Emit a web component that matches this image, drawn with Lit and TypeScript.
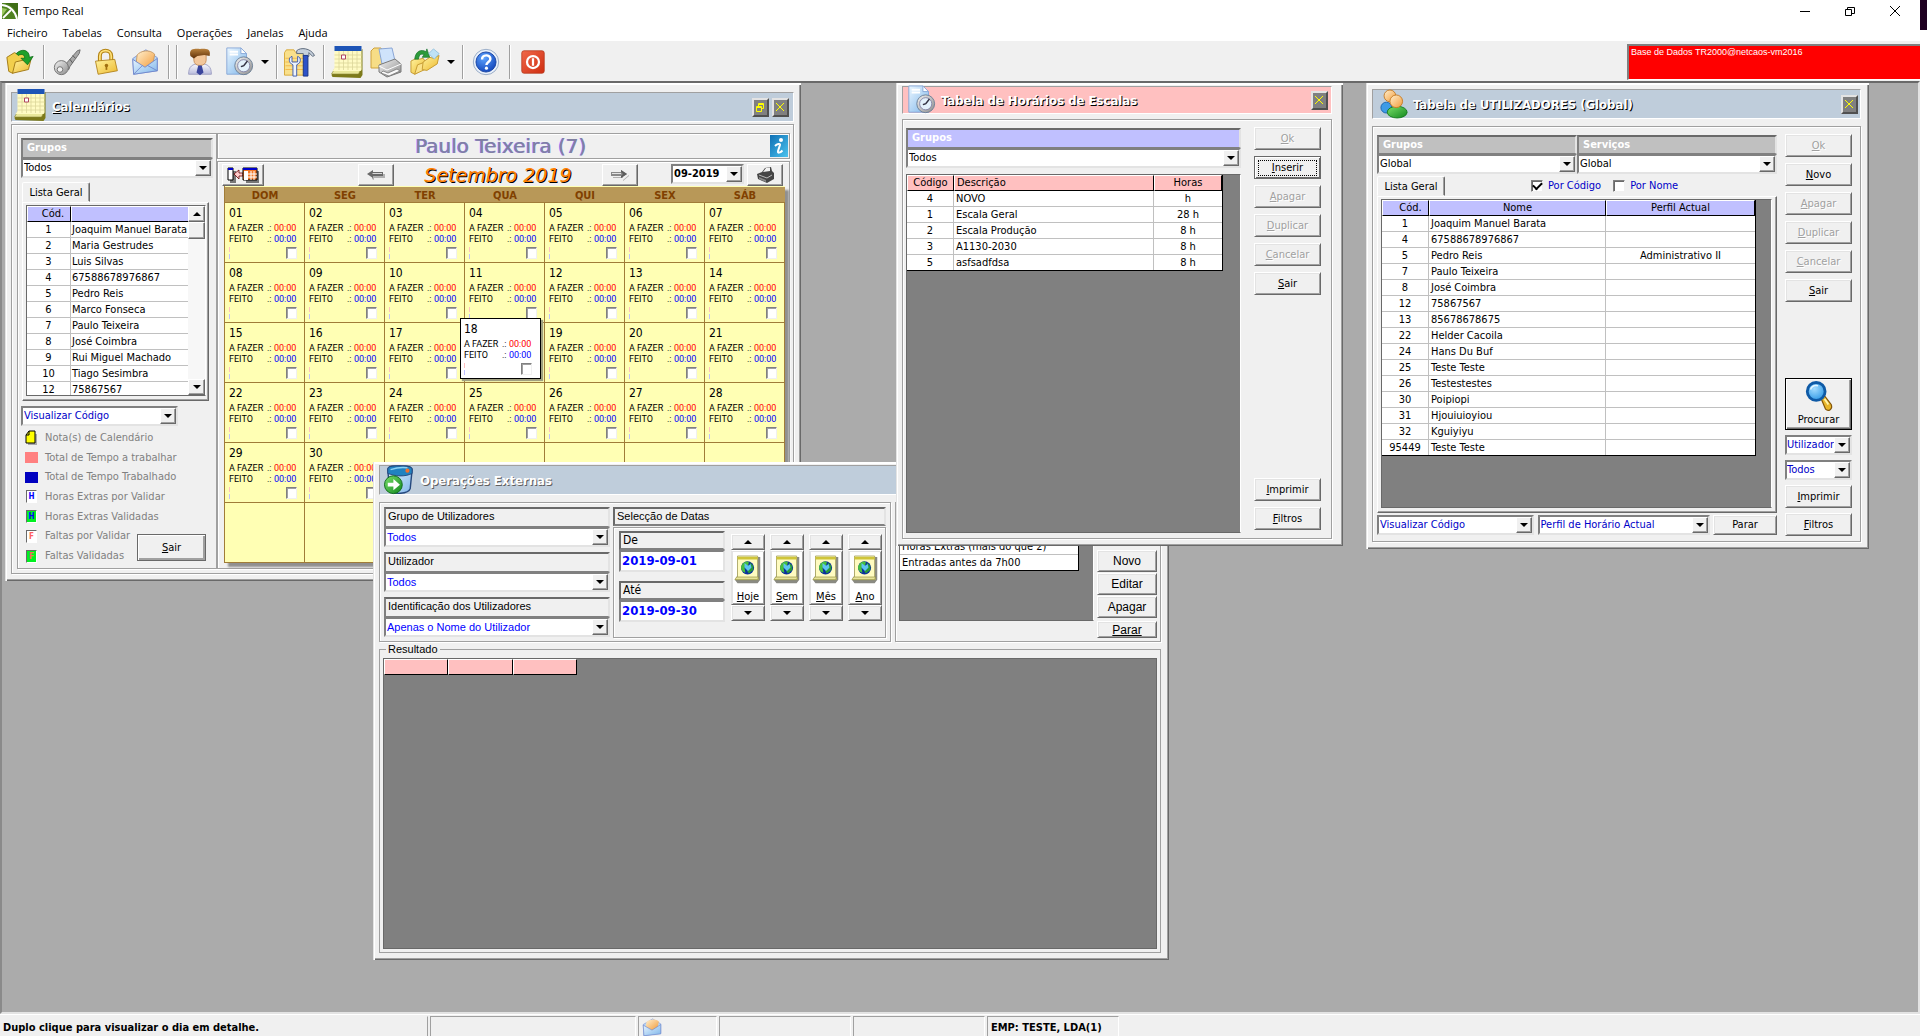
import { LitElement, html, svg, css, nothing } from "lit";
import { classMap } from "lit/directives/class-map.js";

/* ---------- icons ---------- */

const gradients = html`<svg width="0" height="0" class="defs" aria-hidden="true">
  <defs>
    <linearGradient id="gFold" x1="0" y1="0" x2="1" y2="1"><stop offset="0" stop-color="#fff3a0"/><stop offset="1" stop-color="#edb92e"/></linearGradient>
    <linearGradient id="gBlue" x1="0" y1="0" x2="1" y2="1"><stop offset="0" stop-color="#eaf6ff"/><stop offset="1" stop-color="#7fb6ea"/></linearGradient>
    <linearGradient id="gGrey" x1="0" y1="0" x2="1" y2="1"><stop offset="0" stop-color="#f4f4f4"/><stop offset="1" stop-color="#8b8b8b"/></linearGradient>
    <linearGradient id="gOrange" x1="0" y1="0" x2="1" y2="1"><stop offset="0" stop-color="#fff0cf"/><stop offset="1" stop-color="#f29a38"/></linearGradient>
    <linearGradient id="gBrown" x1="0" y1="0" x2="0" y2="1"><stop offset="0" stop-color="#b8803c"/><stop offset="1" stop-color="#5e2f08"/></linearGradient>
    <linearGradient id="gShirt" x1="0" y1="0" x2="0" y2="1"><stop offset="0" stop-color="#fafafe"/><stop offset="1" stop-color="#b9bcdc"/></linearGradient>
    <linearGradient id="gGreen" x1="0" y1="0" x2="1" y2="1"><stop offset="0" stop-color="#7be06a"/><stop offset="1" stop-color="#11871d"/></linearGradient>
    <linearGradient id="gInfo" x1="0" y1="0" x2="1" y2="1"><stop offset="0" stop-color="#0e6fb4"/><stop offset="1" stop-color="#4cc3ee"/></linearGradient>
    <linearGradient id="gRed" x1="0" y1="0" x2="1" y2="1"><stop offset="0" stop-color="#f0694a"/><stop offset="1" stop-color="#cf2d10"/></linearGradient>
    <radialGradient id="gHelp" cx=".4" cy=".3" r=".8"><stop offset="0" stop-color="#5ea4ff"/><stop offset="1" stop-color="#0a3cb4"/></radialGradient>
    <radialGradient id="gLens" cx=".4" cy=".35" r=".8"><stop offset="0" stop-color="#a4dcff"/><stop offset="1" stop-color="#1c8ee2"/></radialGradient>
  </defs>
</svg>`;

const ico = (w: number, h: number, body: unknown, vb = "0 0 32 32") =>
  html`<svg class="ico" width=${w} height=${h} viewBox=${vb} aria-hidden="true">${body}</svg>`;

const logo = ico(16, 16, svg`<path d="M0 0h16v16H0z" fill="#4f8220"/><path d="M3 0h13v13C14 7 10 2 3 0z" fill="#3f6e16"/><path d="M0 2C8 3 13 8 15 16" fill="none" stroke="#fff" stroke-width="2"/><path d="M9 7 1 15" stroke="#fff" stroke-width="1.800"/><path d="M0 5l5 1-5 7z" fill="#9cc860"/>`, "0 0 16 16");

const icons = {
  open: ico(30, 30, svg`<path d="M2 11l8-5 4 2 8-2 3 4v8L8 28l-4-2z" fill="#f2cf4c" stroke="#a07814"/><path d="M8 28l3-12 17-4-3 12z" fill="url(#gFold)" stroke="#a07814"/><path d="M12 7C18 1 26 3 26 11l4-1-6 9-7-7 4 0c0-4-3-5-7-3z" fill="#1fa02a" stroke="#0c6a16" stroke-width=".8"/>`),
  key: ico(30, 30, svg`<path d="M14 19 27 4l3-1-1 4-10 14-1 3-3-1z" fill="#a8a8a8" stroke="#6d6d6d"/><path d="M19 13l3 4M22 9l3 3" stroke="#555"/><circle cx="10" cy="22" r="7.500" fill="url(#gGrey)" stroke="#707070"/><circle cx="8.500" cy="24" r="3" fill="#f0f0f0" stroke="#707070"/>`),
  lock: ico(28, 30, svg`<path d="M9 16V9c0-8 13-8 13 0v6" fill="none" stroke="#b48414" stroke-width="4.500"/><path d="M9 16V9c0-8 13-8 13 0v6" fill="none" stroke="#ffe27a" stroke-width="2"/><path d="M4 15l22-2 3 13-22 4z" fill="url(#gFold)" stroke="#b08018"/><circle cx="16.500" cy="20" r="2" fill="#a07010"/><path d="M16.500 20v5" stroke="#a07010" stroke-width="2"/>`),
  mail: ico(28, 30, svg`<path d="M2 12 17 2l13 9v15L3 30z" fill="#b8d6f6" stroke="#7c93d2"/><path d="M7 8c4-5 14-7 20-1l-2 12-9 5-10-7z" fill="url(#gOrange)" stroke="#c8965a"/><path d="M2 13l14 9 14-10v14L3 30z" fill="url(#gBlue)" stroke="#6f86cc"/><path d="M3 30l10-10M30 26l-11-6" stroke="#6f86cc" fill="none"/>`),
  person: ico(28, 30, svg`<path d="M3 30c0-9 4-12 13-12s13 3 13 12z" fill="url(#gShirt)" stroke="#9a9cc0"/><path d="M9 6v8c0 8 14 8 14 0V6z" fill="#f3c79b" stroke="#c48e5c"/><path d="M5 9C3 0 10 1 16 1s13-1 11 8l-6-1-8 1-4 3z" fill="url(#gBrown)"/><path d="M14 20h4l2 8-4 3-4-3z" fill="#3a459c"/>`),
  docClock: ico(30, 30, svg`<path d="M3 1h15l6 6v22H3z" fill="url(#gBlue)" stroke="#88a8d8"/><path d="M18 1v6h6z" fill="#fff" stroke="#88a8d8"/><path d="M6 5h9M6 8h9" stroke="#fff" stroke-width="2"/><circle cx="21" cy="20" r="9.500" fill="url(#gGrey)" stroke="#6b7f96"/><circle cx="21" cy="20" r="6.500" fill="#e3f1fb" stroke="#88a"/><path d="M21 20l4-5M21 20l-3 1" stroke="#334" stroke-width="1.500"/>`),
  tools: ico(33, 30, svg`<path d="M1 6l2-3h8l2 3h12v24H1z" fill="#f9e08b" stroke="#d6a93a"/><path d="M2 12h22M2 16h22M2 20h22M2 24h22" stroke="#f4b848"/><path d="M9 10c-4 1-4 7 1 9v12h4V19c5-2 5-8 1-9v6h-6z" fill="#eef3fb" stroke="#3e5cae"/><path d="M14 4c4-4 15-3 19 5l-2 1-4-4v4h-6V7h-7z" fill="#c6d0dc" stroke="#5a6678"/><path d="M21 9h5v22h-5z" fill="#2d52c8" stroke="#183384"/>`, "0 0 34 32"),
  calendar: ico(34, 34, svg`<path d="M4 25l-3 5 1 2 28 1 2-3V4z" fill="#7d7a1a"/><path d="M4 24l-3 5h27l3-6z" fill="#e9e79a" stroke="#8c8836" stroke-width=".6"/><path d="M4 4h27v21l-1 1H2l2-3z" fill="#fffbc4"/><path d="M4 1h27v5H4z" fill="#1d54b6"/><path d="M8.500 6v19M13 6v19M17.500 6v19M22 6v19M26.500 6v19M4 10h27M4 14h27M4 18h27M4 22h27" stroke="#dcd79b" stroke-width=".8"/><path d="M11 10h4v4h-4z" fill="#fff" stroke="#b04460"/>`, "0 0 33 34"),
  print: ico(32, 32, svg`<path d="M1 5l3-3h7l2 3h4v14l-6 3H1z" fill="#f7dd86" stroke="#cfa23c"/><path d="M9 3l13-1 3 13-13 3z" fill="#cfe3fb" stroke="#8aa6d6"/><path d="M9 19l16-6 6 5v8l-14 5-8-5z" fill="url(#gGrey)" stroke="#7a7a7a"/><path d="M9 20l8 4 14-6" fill="none" stroke="#fff"/><path d="M13 25l5 2 9-4 3 2-11 5-8-3z" fill="#fafafa" stroke="#777" stroke-width=".8"/>`),
  folders: ico(32, 30, svg`<path d="M1 15l6-3 3 1 4-1 2 3v8L5 29l-4-2z" fill="url(#gFold)" stroke="#c49a30"/><path d="M5 29l3-10 11-4-3 9z" fill="#fbe28a" stroke="#c49a30"/><path d="M14 16l7-5 4 1 6-3-2 9-11 7-5-1z" fill="url(#gFold)" stroke="#c49a30"/><path d="M5 13C6 4 12 2 17 5l1-3 3 9-8 0 2-3c-4-1-5 0-6 5z" fill="#2d9b3a" stroke="#16702a" stroke-width=".7"/><path d="M20 7l5-5 6 5-5 6z" fill="#bfe2f6" stroke="#7ab2d6" stroke-width=".7"/>`),
  help: ico(28, 28, svg`<circle cx="16" cy="16" r="14.500" fill="#eaf1fb" stroke="#8fa3c0"/><circle cx="16" cy="16" r="11.500" fill="url(#gHelp)" stroke="#133f9e"/><path d="M11.500 13c0-6 9.500-6 9.500-.5 0 3.500-4.500 3.500-4.500 7" fill="none" stroke="#fff" stroke-width="2.800"/><circle cx="16.500" cy="23" r="1.800" fill="#fff"/>`),
  power: ico(24, 24, svg`<rect x="1" y="1" width="30" height="30" rx="3" fill="url(#gRed)" stroke="#b4381c"/><circle cx="16" cy="16" r="8" fill="none" stroke="#fff" stroke-width="3"/><path d="M16 11v10" stroke="#fff" stroke-width="3"/>`),
  users: ico(28, 32, svg`<circle cx="7" cy="20" r="6" fill="#3e9be6" stroke="#1a62ac"/><circle cx="11" cy="7" r="6.500" fill="url(#gOrange)" stroke="#c47a24"/><ellipse cx="19" cy="25" rx="11" ry="6.500" fill="url(#gGreen)" stroke="#157a1c"/><circle cx="18" cy="13" r="7" fill="url(#gOrange)" stroke="#c47a24"/>`, "0 0 31 32"),
  external: ico(32, 30, svg`<path d="M4 5C4 1 9 1 16 1s14 0 14 4l-2 20c-2 6-18 7-22 2z" fill="url(#gBlue)" stroke="#26497e" stroke-width="1.500"/><path d="M4 5c0-4 5-4 12-4s14 0 14 4v4c-8 4-18 3-26 0z" fill="#2182c0" stroke="#26497e"/><path d="M7 5c6-2 12-3 18-2" stroke="#8ed2f4" stroke-width="1.500" fill="none"/><circle cx="25" cy="6" r="2.200" fill="#f2702c"/><circle cx="10" cy="21" r="9.500" fill="url(#gGreen)" stroke="#0d6a1a"/><path d="M4 19h6v-4l7 6-7 6v-4H4z" fill="#fff"/>`),
  lens: ico(30, 32, svg`<path d="M18 18l4-2 7 9c2 5-3 8-6 5z" fill="#e9b62a" stroke="#84560a" stroke-width="1.300"/><path d="M22 19l4 6" stroke="#fff2a8" stroke-width="2"/><circle cx="13" cy="11" r="9.500" fill="url(#gLens)" stroke="#0f5aa6" stroke-width="3"/><path d="M7 9c1-3 4-5 8-4" stroke="#e4f6ff" stroke-width="1.600" fill="none"/>`, "0 0 32 34"),
  globe: ico(28, 34, svg`<path d="M6 2h24v26l-3 4H4l-3-4 2-1z" fill="#8a8a82"/><path d="M4 1h23v23l1 4H2l2-4z" fill="#fffbc0" stroke="#a8a464"/><path d="M4 2h23v3H4z" fill="#cfc53a"/><path d="M3 25h25l-1 3H1z" fill="#e8e49a" stroke="#8c8836" stroke-width=".7"/><circle cx="15.500" cy="14.500" r="7.500" fill="#0a2f9e"/><path d="M8 14c1-5 6-8 9-6l-1 4-4 2 1 6c-3-1-5-3-5-6z" fill="#46c03c"/><path d="M18 8l4 4v5l-5 4-2-3 4-4z" fill="#27983a"/><path d="M12 9l4 3 3-2 1 4-4 4-4-4z" fill="#5cc4f0"/>`, "0 0 32 34"),
  swap: ico(32, 16, svg`<path d="M3 4h6v12H3zM19 4h13v12H19z" fill="#777"/><path d="M1 1h5v12H1z" fill="#fff" stroke="#000"/><path d="M1 1h5v2H1z" fill="#00c"/><path d="M7 7l5-4v3h4v3h-4v3z" fill="#fcc" stroke="#600" stroke-width=".8"/><path d="M16 1h14v12H16z" fill="#f37a2a" stroke="#000"/><path d="M16 1h14v2H16z" fill="#00c"/><path d="M17 4h4v9h-4z" fill="#fff"/><path d="M24 4v9M27 4v9M21 7h9M21 10h9" stroke="#fff"/>`, "0 0 32 16"),
  prev: ico(18, 12, svg`<path d="M4 7h1v3l2 1V9h11V5h-2v2z" fill="#b0b0b0"/><path d="M0 5l6-4v2h10v4H6v2z" fill="#696969"/><path d="M6 4h9v1H5z" fill="#d8d8d8"/>`, "0 0 18 12"),
  next: ico(18, 12, svg`<path d="M2 8h10v3l6-5v1l-6 5V9H2z" fill="#b0b0b0"/><path d="M0 3h10V1l6 4-6 4V7H0z" fill="#8a8a8a"/><path d="M10 3V1l6 4-6 4V7l2-2z" fill="#5d5d5d"/><path d="M1 4h9v1H1z" fill="#e4e4e4"/>`, "0 0 18 12"),
  printer: ico(18, 16, svg`<path d="M1 7l5-2 3-4 6-1 1 4 2 2v6l-7 4-9-4z" fill="#454545"/><path d="M7 5l3-4 4-.5V4z" fill="#f2f2f2"/><path d="M3 8l8 3 5-3" stroke="#b8b8b8" fill="none"/><path d="M3 10l7 3v2l-7-3z" fill="#888"/>`, "0 0 18 16"),
  info: ico(18, 22, svg`<rect width="18" height="22" fill="url(#gInfo)"/><circle cx="11" cy="5" r="2" fill="#fff"/><path d="M5 11c2-2 5.500-3 5-1l-2 6c-.5 2.500 2 2 4.500-.5" fill="none" stroke="#fff" stroke-width="2"/>`, "0 0 18 22"),
};

const glyph = {
  min: svg`<path d="M0 5.500h10" stroke="#000"/>`,
  max: svg`<path d="M.5 3.500h6v6h-6zM2.500 3V1.500h7v6H7" fill="none" stroke="#000"/>`,
  close: svg`<path d="M0 0l10 10M10 0L0 10" stroke="#000"/>`,
};

/* ---------- data ---------- */

const people: [string, string][] = [
  ["1", "Joaquim Manuel Barata"], ["2", "Maria Gestrudes"], ["3", "Luis Silvas"], ["4", "67588678976867"],
  ["5", "Pedro Reis"], ["6", "Marco Fonseca"], ["7", "Paulo Teixeira"], ["8", "José Coimbra"],
  ["9", "Rui Miguel Machado"], ["10", "Tiago Sesimbra"], ["12", "75867567"],
];

const users: [string, string, string][] = [
  ["1", "Joaquim Manuel Barata", ""], ["4", "67588678976867", ""], ["5", "Pedro Reis", "Administrativo II"],
  ["7", "Paulo Teixeira", ""], ["8", "José Coimbra", ""], ["12", "75867567", ""], ["13", "85678678675", ""],
  ["22", "Helder Cacoila", ""], ["24", "Hans Du Buf", ""], ["25", "Teste Teste", ""], ["26", "Testestestes", ""],
  ["30", "Poipiopi", ""], ["31", "Hjouiuioyiou", ""], ["32", "Kguiyiyu", ""], ["95449", "Teste Teste", ""],
];

const shifts: [string, string, string][] = [
  ["4", "NOVO", "h"], ["1", "Escala Geral", "28 h"], ["2", "Escala Produção", "8 h"],
  ["3", "A1130-2030", "8 h"], ["5", "asfsadfdsa", "8 h"],
];

const weekdays = ["DOM", "SEG", "TER", "QUA", "QUI", "SEX", "SÁB"];
const firstWeekday = 0;
const daysInMonth = 30;
const selectedDay = 18;

/* ---------- template helpers ---------- */

/** Renders a caption in which "&" marks the accelerator letter. */
const caption = (text: string) => {
  const at = text.indexOf("&");
  return at < 0 ? text : html`${text.slice(0, at)}<u>${text[at + 1]}</u>${text.slice(at + 2)}`;
};

const button = (text: string, disabled = false, extra = "") =>
  html`<button class="btn ${extra}" ?disabled=${disabled}><span>${caption(text)}</span></button>`;

const combo = (value: string, label: string, extra = "") =>
  html`<label class="combo ${extra}"><select aria-label=${label}><option>${value}</option></select><i class="drop"></i></label>`;

const labelledCombo = (label: string, value: string, extra = "") =>
  html`<label class="labelled ${extra}"><span class="cap">${label}</span>
    <span class="combo"><select><option>${value}</option></select><i class="drop"></i></span></label>`;

const titleBar = (icon: unknown, text: string, extra: string, buttons: unknown) =>
  html`<header class="title ${extra}">${icon}<h2>${caption(text)}</h2>${buttons}</header>`;

const closeBtn = html`<button class="mini" aria-label="Fechar"><svg width="11" height="11" viewBox="0 0 11 11"><path d="M1 1l8 8M9 1L1 9" stroke="#ff0"/></svg></button>`;
const restoreBtn = html`<button class="mini" aria-label="Restaurar"><svg width="11" height="11" viewBox="0 0 11 11"><path d="M1.500 4.500h5v5h-5zM1 5.500h6M3.500 4V1.500h5v5H7M3 2.500h6" fill="none" stroke="#ff0"/></svg></button>`;

class AppRoot extends LitElement {
  static styles = css`
    :host { display: block; --ui: "DejaVu Sans Condensed", "DejaVu Sans", sans-serif; --sans: "Liberation Sans", Arial, sans-serif;
      font: 11px/14px var(--ui); color: #000; }
    * { box-sizing: border-box; }
    button, select, input { font: inherit; color: inherit; margin: 0; }
    h1, h2, p, ul, menu { margin: 0; padding: 0; font: inherit; list-style: none; }
    svg { display: block; flex: none; }
    .defs { position: absolute; }
    .screen { display: grid; grid-template-columns: 1fr 7px; height: 100vh; background: #fff; }
    .edge { background: #1e0020; height: 30px; }
    .app { display: flex; flex-direction: column; min-width: 0; background: #f0f0f0; }

    .caption { display: flex; align-items: center; height: 22px; padding: 0 3px 0 2px; background: #fff; font: 11px/16px "Open Sans", sans-serif; }
    .caption h1 { padding-left: 5px; flex: 1; }
    .caption button { width: 45px; height: 20px; border: 0; background: none; display: grid; place-items: center; padding: 0; }
    .menu { display: flex; gap: 15px; height: 19px; padding: 0 7px; background: #fff; font: 11px/21px "Open Sans", sans-serif; }
    .menu a { color: #000; text-decoration: none; }

    .toolbar { display: flex; align-items: center; height: 40px; padding: 1px 0 0; }
    .toolbar button { width: 39px; height: 38px; border: 0; padding: 0; background: none; display: grid; place-items: center; }
    .toolbar .arrow { width: 14px; }
    .toolbar hr { width: 8px; height: 34px; margin: 0; border: 0; background: linear-gradient(90deg, transparent 4px, #a0a0a0 4px, #a0a0a0 5px, #fff 5px, #fff 6px, transparent 6px); }
    .arrow::before, .drop::before { content: ""; border: 4px solid transparent; border-top-color: #000; border-bottom: 0; }
    .db { margin: 0 0 0 auto; width: 293px; height: 36px; padding: 0 2px; background: #f00; color: #fff; font: 9px/13px var(--sans); border: 2px solid #808080; border-right: 0; border-bottom: 1px solid #fff; }

    .desktop { position: relative; flex: 1; overflow: hidden; background: #ababab; border: 2px solid; border-color: #696969 #e3e3e3 #e3e3e3 #8a8a8a; }
    .win { position: absolute; display: flex; flex-direction: column; background: #f0f0f0; box-shadow: inset 1px 0 #e3e3e3, inset 2px 2px #fff, inset -1px -1px #696969, inset -2px -2px #a0a0a0; }
    .w-cal { left: 3px; top: 0; width: 796px; height: 498px; padding: 9px 7px 7px 6px; gap: 2px; }
    .w-ops { left: 371px; top: 379px; width: 796px; height: 498px; padding: 3px 8px 7px 6px; }
    .w-shift { left: 894px; top: 0; width: 447px; height: 463px; padding: 3px 11px 7px 6px; gap: 5px; }
    .w-users { left: 1364px; top: 0; width: 503px; height: 466px; padding: 6px 8px 7px 6px; gap: 7px; }

    .title { display: flex; align-items: center; height: 30px; flex: none; padding: 0 3px; background: #bfcddb; border: 1px solid; border-color: #a0a0a0 #fff #fff #a0a0a0; }
    .title h2 { flex: 1; font: bold 13px/16px var(--ui); color: #fff; text-shadow: 1px 1px #000; padding: 1px 0 0 5px; }
    .title.pink { background: #ffc0c0; height: 28px; }
    .title.soft h2 { text-shadow: 1px 1px #606060; }
    .w-cal .title { padding: 0 4px 0 1px; }
    .w-cal .title h2 { padding-top: 0; }
    .w-cal .title .ico { align-self: flex-start; margin-top: -5px; }
    .w-users .title { padding: 0 2px 0 7px; }
    .mini { width: 17px; height: 19px; margin-left: 3px; padding: 0; display: grid; place-items: center; background: #808080; border: 2px solid; border-color: #e3e3e3 #505050 #505050 #e3e3e3; }

    .etch { border: 1px solid #a0a0a0; box-shadow: 1px 1px #fff, inset 1px 1px #fff; }
    .col { display: flex; flex-direction: column; }
    .row { display: flex; }
    .fill { flex: 1; min-width: 0; min-height: 0; }

    .btn { height: 23px; flex: none; padding: 0; text-align: center; background: #f0f0f0; border: 1px solid; border-color: #fff #696969 #696969 #fff; box-shadow: inset 1px 1px #e3e3e3, inset -1px -1px #a0a0a0; }
    .btn:disabled { color: #a0a0a0; text-shadow: 1px 1px #fff; }
    .btn.focus { border-color: #696969; box-shadow: inset 1px 1px #fff, inset -1px -1px #696969; padding: 1px; }
    .btn.focus span { display: block; border: 1px dotted #000; margin: 1px 2px; }

    .combo { display: grid; height: 20px; background: #fff; border: 2px solid; border-color: #808080 #e3e3e3 #e3e3e3 #808080; }
    .combo select { grid-area: 1 / 1; width: 100%; height: 16px; border: 0; outline: 0; padding: 0 16px 0 1px; appearance: none; background: none; border-radius: 0; }
    .drop { grid-area: 1 / 1; justify-self: end; width: 16px; height: 16px; pointer-events: none; display: grid; place-items: center; background: #f0f0f0; border: 1px solid; border-color: #fff #696969 #696969 #fff; box-shadow: inset -1px -1px #a0a0a0; }
    .blue { color: #0000c8; }
    .labelled { display: flex; flex-direction: column; }
    .labelled .cap { height: 20px; padding: 1px 4px; background: #c0c0c0; color: #fff; font-weight: bold; border: 2px solid; border-color: #696969 #e3e3e3 #808080 #808080; border-bottom-width: 1px; }
    .labelled.violet .cap { background: #c0c0ff; }

    .grid { background: #808080; border: 1px solid; border-color: #696969 #fff #696969 #696969; overflow: hidden; }
    .grid table { border-collapse: separate; border-spacing: 0; table-layout: fixed; border-right: 1px solid #000; border-bottom: 1px solid #000; }
    .grid th, .grid td { height: 16px; padding: 0; line-height: 15px; white-space: nowrap; overflow: hidden; font-weight: normal; text-align: center; vertical-align: top; }
    .grid th { background: #c0c0ff; border: 1px solid; border-color: #fff #000 #000 #fff; line-height: 14px; }
    .grid .code { width: 47px; padding-left: 10px; }
    .grid.rosy th { background: #ffc0c0; }
    .grid td { background: #fff; border-right: 1px solid #c0c0c0; border-bottom: 1px solid #c0c0c0; }
    .grid td:last-child { border-right: 0; }
    .grid .l { text-align: left; padding-left: 2px; }
    .grid tr:last-child td { border-bottom: 0; height: 15px; }

    .tabs { display: flex; align-items: flex-end; height: 20px; }
    .tab { height: 20px; padding: 2px 0 0; border: 1px solid; border-color: #fff #696969 transparent #fff; border-radius: 2px 2px 0 0; background: #f0f0f0; width: 68px; box-shadow: inset -1px 0 #a0a0a0; }
    .tabpanel { border: 1px solid; border-color: #fff #696969 #696969 #fff; box-shadow: inset -1px -1px #a0a0a0; }

    /* calendar window */
    .cal-body { padding: 8px 3px 4px 5px; }
    .side { width: 200px; flex: none; padding: 4px 3px 2px; }
    .side .tabs { margin: 4px 0 0 1px; }
    .side .tabpanel { height: 199px; margin: 0 4px 0 1px; padding: 2px 2px 4px 3px; }
    .people { display: grid; grid-template-columns: 1fr 17px; height: 191px; background: #fff; }
    .people table { border: 0; width: 162px; }
    .people .clip { overflow: hidden; }
    .people .code { width: 44px; padding-left: 8px; }
    .people .l { padding-left: 1px; }
    .scroll { display: flex; flex-direction: column; background: #f7f7f7; }
    .scroll button { height: 16px; width: 17px; padding: 0; display: grid; place-items: center; background: #f0f0f0; border: 1px solid; border-color: #fff #696969 #696969 #fff; box-shadow: inset -1px -1px #a0a0a0; }
    .scroll span { height: 17px; background: #f0f0f0; border: 1px solid; border-color: #fff #696969 #696969 #fff; box-shadow: inset -1px -1px #a0a0a0; }
    .scroll .down { margin-top: auto; }
    .up::before { content: ""; border: 4px solid transparent; border-bottom-color: #000; border-top: 0; }
    .down::before { content: ""; border: 4px solid transparent; border-top-color: #000; border-bottom: 0; }
    .side > .combo { width: 157px; margin-top: 5px; }
    .foot { display: grid; margin-top: 2px; }
    .legend { grid-area: 1 / 1; display: grid; grid-auto-rows: 1fr; color: #808080; }
    .legend li { display: grid; grid-template-columns: 20px 1fr; align-items: center; padding-left: 4px; }
    .chip { width: 13px; height: 11px; }
    .c-pink { background: #ff8080; }
    .c-blue { background: #0000c0; }
    .c-box { width: 11px; height: 13px; margin-left: 1px; background: #fff; border: 1px solid; border-color: #696969 #fff #fff #696969; font: bold 8px/11px var(--ui); text-align: center; }
    .c-green { background: #00f020; }
    .t-blue { color: #0000ff; } .t-pink { color: #ff6060; }
    .foot .btn { grid-area: 1 / 1; align-self: end; justify-self: end; width: 69px; height: 27px; margin: 0 7px 5px 0; border-color: #696969; box-shadow: inset 1px 1px #fff, inset -2px -2px #a0a0a0; }

    .person { display: grid; grid-template-columns: 1fr auto; align-items: center; height: 26px; padding: 0 1px 0 14px; }
    .person h2 { text-align: center; font: 20px/24px "DejaVu Sans", sans-serif; color: #8080a0; text-shadow: -1px 0 #9080ff; }
    .cal-panel { margin-top: 2px; padding: 2px 6px 0 4px; flex: 1; }
    .cal-tools { display: flex; height: 22px; }
    .tool { width: 36px; height: 22px; padding: 0; display: grid; place-items: center; background: #f0f0f0; border: 1px solid; border-color: #fff #696969 #696969 #fff; box-shadow: inset -1px -1px #a0a0a0; }
    .tool.wide { width: 42px; margin-right: 94px; }
    .month { flex: 1; text-align: center; font: italic 19px/22px "DejaVu Sans", sans-serif; color: #ff8000; text-shadow: 1px 1px #000; }
    .cal-tools .combo { width: 73px; font-weight: bold; margin: 0 3px 0 33px; }
    .cal { margin-left: 2px; width: 561px; table-layout: fixed; border-collapse: separate; border-spacing: 0; background: #ffffb4; border-left: 1px solid #a07c38; box-shadow: 4px 4px 2px #909090; }
    .cal th { height: 17px; padding: 2px 0 0; background: #b89858; color: #804000; font: bold 11px/13px var(--ui); border-top: 1px solid #ffffb4; border-bottom: 1px solid #a07c38; }
    .cal td { height: 60px; padding: 0; vertical-align: top; border-right: 1px solid #a07c38; border-bottom: 1px solid #a07c38; position: relative; }
    .day { display: grid; grid-template-columns: 38px 7px 1fr; grid-template-rows: 20px 11px 11px 15px; padding-left: 4px; width: 79px; height: 59px; font: 9px/11px Roboto, var(--sans); align-items: center; }
    .day time { grid-column: 1 / 4; font: 12px/20px var(--ui); }
    .day b { font-weight: normal; color: #f00; }
    .day b.done { color: #00f; }
    .day em { width: 1px; height: 12px; background: linear-gradient(#ffc0c0 5px, transparent 5px, transparent 7px, #c0c0ff 7px); }
    .day input { grid-column: 3; appearance: none; width: 11px; height: 12px; margin-left: 12px; background: #fff; border: 1px solid; border-color: #808080 #f0f0f0 #f0f0f0 #808080; box-shadow: inset 1px 1px #a0a0a0; }
    .day.picked { position: absolute; left: -5px; top: -5px; width: 81px; height: 61px; background: #fff; border: 1px solid #000; padding-left: 3px; z-index: 1; box-shadow: 2px 2px 1px #a0a080; }

    /* external operations window */
    .w-ops { font-family: var(--sans); }
    .ops-top { display: flex; gap: 4px; margin-top: 7px; height: 140px; flex: none; }
    .ops-filter { display: flex; gap: 3px; width: 512px; padding: 4px; }
    .ops-filter .col { gap: 5px; width: 226px; }
    .flat .cap { height: 20px; line-height: 15px; background: #f0f0f0; color: #000; font-weight: normal; padding: 0 2px; }
    .flat .combo { color: #0000ff; }
    .dates { flex: 1; }
    .dates .cap { height: 19px; padding: 0 2px; line-height: 15px; border: 2px solid; border-color: #696969 #e3e3e3 #808080 #696969; }
    .dates .panel { display: flex; justify-content: space-between; padding: 3px 3px 2px 5px; height: 111px; margin-top: 1px; }
    .range { display: flex; flex-direction: column; gap: 9px; width: 106px; font-family: var(--ui); }
    .range label { display: flex; flex-direction: column; font-size: 12px; }
    .range input { height: 22px; padding: 0 0 2px 1px; width: 106px; border: 2px solid; border-color: #808080 #e3e3e3 #e3e3e3 #808080; background: #fff; font: bold 13px/16px var(--ui); color: #0000ff; border-radius: 0; outline: 0; }
    .spins { display: flex; gap: 5px; padding-top: 3px; }
    .spin { display: flex; flex-direction: column; width: 34px; }
    .spin .btn { height: 16px; display: grid; place-items: center; }
    .spin .pick { height: 55px; background: #fff; display: flex; flex-direction: column; align-items: center; gap: 3px; padding-top: 2px; font-family: var(--ui); border-left-color: #e3e3e3; }
    .saved { flex: 1; display: flex; gap: 3px; padding: 3px; }
    .saved .grid { flex: 1; height: 115px; }
    .saved .grid table { width: 179px; font-family: var(--ui); }
    .saved .col { width: 60px; gap: 1px; justify-content: flex-end; font-size: 12px; }
    .saved .btn { height: 22px; }
    .saved .btn:last-child { height: 17px; margin-top: 2px; text-decoration: underline; }
    fieldset { flex: 1; min-width: 0; min-height: 0; margin: 0; border: 1px solid #a0a0a0; padding: 2px 3px 3px; display: flex; }
    legend { padding: 0 2px; margin-left: 3px; line-height: 14px; }
    .result { border-color: #696969; }
    .result table { width: 193px; border: 0; }
    .result th { height: 16px; }

    /* shift and user tables */
    .body2 { display: flex; gap: 13px; padding: 8px 10px 5px 3px; }
    .body3 { display: flex; gap: 8px; padding: 8px 8px 5px 4px; }
    .acts { width: 67px; display: flex; flex-direction: column; gap: 6px; flex: none; }
    .body2 .acts { padding-bottom: 3px; margin-top: -1px; }
    .body3 .acts { gap: 5px; margin-top: -1px; }
    .acts .top { display: flex; flex-direction: column; gap: 6px; margin-bottom: auto; }
    .acts .combo select { padding-left: 0; }
    .find { height: 52px; border: 1px solid #000; font: inherit; background: #f0f0f0; box-shadow: inset 1px 1px #fff, inset -1px -1px #696969, inset -2px -2px #a0a0a0; display: flex; flex-direction: column; align-items: center; justify-content: space-between; padding: 2px 0 3px; }
    .shifts { margin-top: 6px; }
    .shifts table { width: 316px; }
    .pair { display: grid; grid-template-columns: 1fr 1fr; }
    .pair .cap { height: 19px; }
    .order { display: flex; flex: 1; align-self: center; padding-left: 86px; color: #0000c8; gap: 12px; }
    .order label { display: flex; align-items: center; gap: 5px; }
    .order input { appearance: none; width: 12px; height: 12px; background: #fff; border: 1px solid; border-color: #808080 #f0f0f0 #f0f0f0 #808080; display: grid; place-items: center; box-shadow: inset 1px 1px #696969; }
    .order input:checked::before { content: ""; width: 7px; height: 4px; border: solid #000; border-width: 0 0 2px 2px; transform: rotate(-45deg); margin-top: -2px; }
    .body3 .tabs { margin-top: 2px; }
    .body3 .tabpanel { padding: 2px 4px 4px 3px; display: flex; }
    .users { flex: 1; }
    .users table { width: 374px; }
    .bottom { display: grid; grid-template-columns: 157px 172px 64px; justify-content: space-between; margin-top: 2px; height: 21px; }
    .bottom .btn { height: 20px; }

    .status { display: flex; height: 22px; gap: 2px; padding-top: 1px; font: bold 11px/22px var(--ui); border-top: 1px solid #fff; }
    .status > * { border-top: 1px solid #a0a0a0; border-left: 1px solid #a0a0a0; border-right: 1px solid #fff; width: 132px; }
    .status p:first-child { width: 428px; padding-left: 3px; border-left: 0; border-top-color: transparent; border-right: 1px solid #a0a0a0; }
    .status p:nth-child(2) { width: 206px; }
    .status p:nth-child(3) { width: 79px; padding-left: 3px; }
    .status p:last-child { padding-left: 3px; }
  `;

  private calendarCell(index: number) {
    const day = index - firstWeekday + 1;
    if (day < 1 || day > daysInMonth) return html`<td></td>`;
    const text = String(day).padStart(2, "0");
    return html`<td><div class=${classMap({ day: true, picked: day === selectedDay })}>
      <time>${text}</time>
      <span>A FAZER</span><span>.:</span><b>00:00</b>
      <span>FEITO</span><span>.:</span><b class="done">00:00</b>
      <em></em><input type="checkbox" aria-label="Dia ${text}">
    </div></td>`;
  }

  private calendarWindow() {
    const chips: [unknown, string][] = [
      [html`<svg width="12" height="15" viewBox="0 0 12 15"><path d="M3 4h9v11H3z" fill="#aaa"/><path d="M1 5l3-4h6v12H1z" fill="#ff0" stroke="#000"/><path d="M1 5h3V1" fill="none" stroke="#000"/></svg>`, "Nota(s) de Calendário"],
      [html`<div class="chip c-pink"></div>`, "Total de Tempo a trabalhar"],
      [html`<div class="chip c-blue"></div>`, "Total de Tempo Trabalhado"],
      [html`<div class="c-box t-blue">H</div>`, "Horas Extras por Validar"],
      [html`<div class="c-box c-green t-blue">H</div>`, "Horas Extras Validadas"],
      [html`<div class="c-box t-pink">F</div>`, "Faltas por Validar"],
      [html`<div class="c-box c-green t-pink">F</div>`, "Faltas Validadas"],
    ];
    return html`<section class="win w-cal">
      ${titleBar(icons.calendar, "&Calendários", "", html`${restoreBtn}${closeBtn}`)}
      <div class="etch row fill cal-body">
        <div class="side etch col">
          ${labelledCombo("Grupos", "Todos")}
          <div class="tabs"><button class="tab">Lista Geral</button></div>
          <div class="tabpanel">
            <div class="grid people">
              <div class="clip"><table>
                <thead><tr><th class="code">Cód.</th><th></th></tr></thead>
                <tbody>${people.map(([c, n]) => html`<tr><td>${c}</td><td class="l">${n}</td></tr>`)}</tbody>
              </table></div>
              <div class="scroll"><button class="up" aria-label="Subir"></button><span></span><button class="down" aria-label="Descer"></button></div>
            </div>
          </div>
          ${combo("Visualizar Código", "Visualizar", "blue")}
          <div class="foot fill">
            <ul class="legend">${chips.map(([c, t]) => html`<li>${c}<span>${t}</span></li>`)}</ul>
            ${button("&Sair")}
          </div>
        </div>
        <div class="col fill">
          <div class="etch person"><h2>Paulo Teixeira (7)</h2>${icons.info}</div>
          <div class="etch cal-panel">
            <div class="cal-tools">
              <button class="tool wide" aria-label="Alternar vista">${icons.swap}</button>
              <button class="tool" aria-label="Mês anterior">${icons.prev}</button>
              <h2 class="month">Setembro 2019</h2>
              <button class="tool" aria-label="Mês seguinte">${icons.next}</button>
              ${combo("09-2019", "Mês")}
              <button class="tool" aria-label="Imprimir">${icons.printer}</button>
            </div>
            <table class="cal">
              <thead><tr>${weekdays.map((d) => html`<th>${d}</th>`)}</tr></thead>
              <tbody>${[0, 1, 2, 3, 4, 5].map((w) => html`<tr>${weekdays.map((_, d) => this.calendarCell(w * 7 + d))}</tr>`)}</tbody>
            </table>
          </div>
        </div>
      </div>
    </section>`;
  }

  private operationsWindow() {
    return html`<section class="win w-ops">
      ${titleBar(icons.external, "Operações Externas", "soft", nothing)}
      <div class="ops-top">
        <div class="etch ops-filter">
          <div class="col">
            ${labelledCombo("Grupo de Utilizadores", "Todos", "flat")}
            ${labelledCombo("Utilizador", "Todos", "flat")}
            ${labelledCombo("Identificação dos Utilizadores", "Apenas o Nome do Utilizador", "flat")}
          </div>
          <div class="dates">
            <div class="cap">Selecção de Datas</div>
            <div class="etch panel">
              <div class="range">
                <label><span class="cap">De</span><input type="text" value="2019-09-01"></label>
                <label><span class="cap">Até</span><input type="text" value="2019-09-30"></label>
              </div>
              <div class="spins">${["&Hoje", "&Sem", "&Mês", "&Ano"].map((t) => html`<div class="spin">
                <button class="btn up" aria-label="Avançar"></button>
                <button class="btn pick">${icons.globe}<span>${caption(t)}</span></button>
                <button class="btn down" aria-label="Recuar"></button>
              </div>`)}</div>
            </div>
          </div>
        </div>
        <div class="etch saved">
          <div class="grid"><table><tbody>
            <tr><td></td></tr><tr><td></td></tr>
            <tr><td class="l">Horas Extras (mais do que 2)</td></tr>
            <tr><td class="l">Entradas antes da 7h00</td></tr>
          </tbody></table></div>
          <div class="col">${button("Novo")}${button("Editar")}${button("Apagar")}${button("Parar")}</div>
        </div>
      </div>
      <fieldset><legend>Resultado</legend>
        <div class="grid rosy result fill"><table><thead><tr><th></th><th></th><th></th></tr></thead></table></div>
      </fieldset>
    </section>`;
  }

  private shiftWindow() {
    return html`<section class="win w-shift">
      ${titleBar(icons.docClock, "Tabela de Horários de Escalas", "pink", closeBtn)}
      <div class="etch fill body2">
        <div class="col fill">
          ${labelledCombo("Grupos", "Todos", "violet")}
          <div class="grid rosy shifts fill"><table>
            <colgroup><col width="47"><col width="200"><col></colgroup>
            <thead><tr><th>Código</th><th class="l">Descrição</th><th>Horas</th></tr></thead>
            <tbody>${shifts.map(([c, d, h]) => html`<tr><td>${c}</td><td class="l">${d}</td><td>${h}</td></tr>`)}</tbody>
          </table></div>
        </div>
        <div class="acts">
          <div class="top">${button("&Ok", true)}${button("&Inserir", false, "focus")}${button("&Apagar", true)}${button("&Duplicar", true)}${button("&Cancelar", true)}${button("&Sair")}</div>
          ${button("&Imprimir")}${button("&Filtros")}
        </div>
      </div>
    </section>`;
  }

  private usersWindow() {
    return html`<section class="win w-users">
      ${titleBar(icons.users, "Tabela de UTILIZADORES (Global)", "", closeBtn)}
      <div class="etch fill body3">
        <div class="col fill">
          <div class="pair">${labelledCombo("Grupos", "Global")}${labelledCombo("Serviços", "Global")}</div>
          <div class="tabs"><button class="tab">Lista Geral</button>
            <div class="order">
              <label><input type="checkbox" checked>Por Código</label>
              <label><input type="checkbox">Por Nome</label>
            </div>
          </div>
          <div class="tabpanel fill"><div class="grid users"><table>
            <colgroup><col width="47"><col width="177"><col></colgroup>
            <thead><tr><th class="code">Cód.</th><th>Nome</th><th>Perfil Actual</th></tr></thead>
            <tbody>${users.map(([c, n, p]) => html`<tr><td>${c}</td><td class="l">${n}</td><td>${p}</td></tr>`)}</tbody>
          </table></div></div>
          <div class="bottom">${combo("Visualizar Código", "Visualizar", "blue")}${combo("Perfil de Horário Actual", "Perfil", "blue")}${button("Parar")}</div>
        </div>
        <div class="acts">
          <div class="top">${button("&Ok", true)}${button("&Novo")}${button("&Apagar", true)}${button("&Duplicar", true)}${button("&Cancelar", true)}${button("&Sair")}</div>
          <button class="find">${icons.lens}<span>Procurar</span></button>
          ${combo("Utilizador", "Procurar por", "blue")}${combo("Todos", "Filtro", "blue")}
          ${button("&Imprimir")}${button("&Filtros")}
        </div>
      </div>
    </section>`;
  }

  private tool(icon: unknown, label: string) {
    return html`<button aria-label=${label}>${icon}</button>`;
  }

  render() {
    const arrow = html`<button class="arrow" aria-label="Mais opções"></button>`;
    const win = (body: unknown, label: string) =>
      html`<button aria-label=${label}><svg width="10" height="10" viewBox="0 0 10 10">${body}</svg></button>`;
    return html`${gradients}<div class="screen">
      <main class="app">
        <div class="caption">${logo}<h1>Tempo Real</h1>${win(glyph.min, "Minimizar")}${win(glyph.max, "Restaurar")}${win(glyph.close, "Fechar")}</div>
        <nav class="menu">${["Ficheiro", "Tabelas", "Consulta", "Operações", "Janelas", "Ajuda"].map((m) => html`<a href="#">${m}</a>`)}</nav>
        <div class="toolbar">
          ${this.tool(icons.open, "Abrir")}<hr>
          ${this.tool(icons.key, "Chave")}${this.tool(icons.lock, "Bloquear")}${this.tool(icons.mail, "Correio")}<hr><hr>
          ${this.tool(icons.person, "Utilizadores")}${this.tool(icons.docClock, "Horários")}${arrow}<hr>
          ${this.tool(icons.tools, "Ferramentas")}<hr>
          ${this.tool(icons.calendar, "Calendários")}${this.tool(icons.print, "Imprimir")}${this.tool(icons.folders, "Pastas")}${arrow}<hr>
          ${this.tool(icons.help, "Ajuda")}<hr>
          ${this.tool(icons.power, "Sair")}
          <p class="db">Base de Dados TR2000@netcaos-vm2016</p>
        </div>
        <div class="desktop">
          ${this.calendarWindow()}${this.operationsWindow()}${this.shiftWindow()}${this.usersWindow()}
        </div>
        <footer class="status"><p>Duplo clique para visualizar o dia em detalhe.</p><p></p><p>${ico(20, 20, svg`<path d="M2 12 17 3l13 8v15L3 30z" fill="#b8d6f6" stroke="#7c93d2"/><path d="M7 8c4-4 14-6 20-1l-2 10-9 4-10-6z" fill="url(#gOrange)"/><path d="M2 13l14 8 14-9v15L3 30z" fill="url(#gBlue)" stroke="#6f86cc"/>`)}</p><p></p><p></p><p>EMP: TESTE, LDA(1)</p></footer>
      </main>
      <div class="edge"></div>
    </div>`;
  }
}
customElements.define("app-root", AppRoot);
